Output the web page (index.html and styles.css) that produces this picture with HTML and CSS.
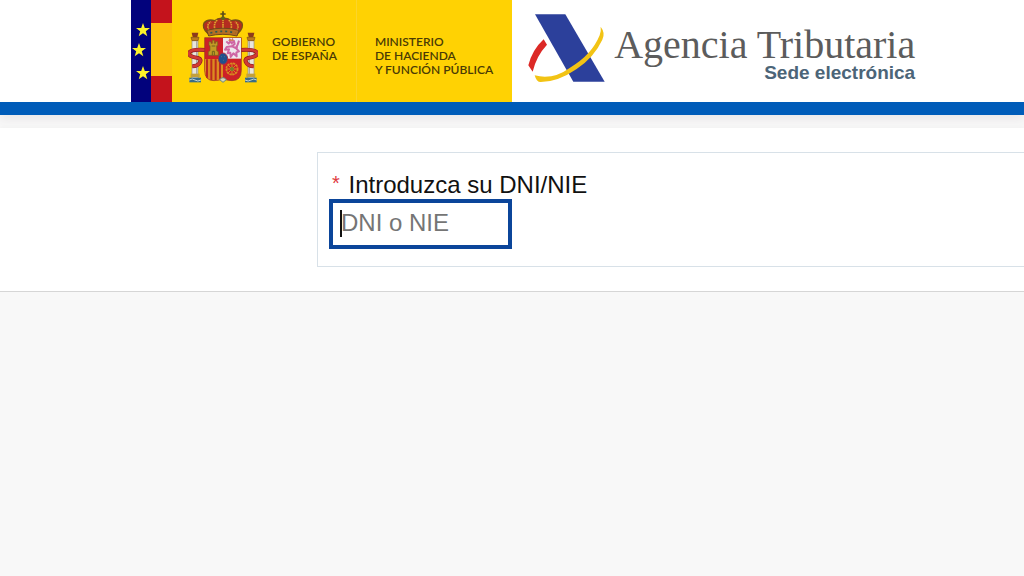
FILE: index.html
```html
<!DOCTYPE html>
<html lang="es">

<head>
    <meta charset="UTF-8">
    <meta name="viewport" content="width=device-width, initial-scale=1.0">
    <title>Agencia Tributaria - Sede electrónica</title>
    <link rel="stylesheet" href="styles.css">
</head>

<body>
    <header class="header">
        <div class="gobierno">
            <!-- EU and Spanish flags -->
            <svg class="flag" viewBox="0 0 41 102" aria-hidden="true">
                <defs>
                    <path id="star" d="M0,-7 L1.8,-2.1 L7,-2 L2.8,1.2 L4.3,6.2 L0,3.2 L-4.3,6.2 L-2.8,1.2 L-7,-2 L-1.8,-2.1 Z" />
                </defs>
                <rect width="41" height="102" fill="#c4131c" />
                <rect x="20" y="23" width="21" height="53" fill="#ffc20e" />
                <rect width="20" height="102" fill="#02027c" />
                <g fill="#fdf22b">
                    <use href="#star" x="12" y="30" />
                    <use href="#star" x="8" y="50" />
                    <use href="#star" x="12" y="73" />
                </g>
            </svg>

            <!-- coat of arms -->
            <svg class="escudo" viewBox="24 30 210 222" aria-hidden="true">
                <g id="column">
                    <rect x="36" y="122" width="18" height="112" fill="#e9e6dc" stroke="#8f8b82" stroke-width="2" />
                    <path d="M50 124v108" stroke="#aaa9a4" stroke-width="4" />
                    <path d="M35 98h20l-3 13h-14z" fill="#8d3b1c" />
                    <path d="M33 112h24l-3 10h-18z" fill="#bd7b1c" stroke="#7a4c19" stroke-width="2" />
                    <rect x="32" y="221" width="27" height="10" fill="#c3a03b" />
                    <path d="M28 233h35v14h-35z" fill="#3a6c87" />
                    <path d="M28 240q9-6 17 0t18 0" fill="none" stroke="#c5d5ce" stroke-width="3" />
                    <path d="M79 150Q34 146 27 158Q24 170 54 174Q67 178 58 190Q52 198 37 199" fill="none" stroke="#8e1b26" stroke-width="12" />
                    <path d="M79 150Q34 146 27 158Q24 170 54 174Q67 178 58 190Q52 198 37 199" fill="none" stroke="#d13a32" stroke-width="8" />
                </g>
                <use href="#column" transform="translate(258 0) scale(-1 1)" />

                <!-- crown -->
                <path d="M83 100Q65 83 72 69Q83 56 104 62Q115 53 129 55Q143 53 154 62Q175 56 186 69Q192 83 174 100z" fill="#b42c20" stroke="#775016" stroke-width="4" />
                <path d="M91 96Q75 76 93 65M108 97Q97 72 112 60M129 98V55M149 97Q161 72 146 60M167 96Q182 76 165 65" fill="none" stroke="#dea52c" stroke-width="5" stroke-dasharray="5 2" />
                <path d="M129 34v20M121 42h16" stroke="#594a1b" stroke-width="5" />
                <circle cx="129" cy="55" r="6" fill="#63631b" />
                <path d="M80 91Q129 78 177 91L171 108Q129 98 86 108z" fill="#b46e23" stroke="#70461b" stroke-width="3" />
                <path d="M91 99Q129 89 166 99" fill="none" stroke="#2c5b52" stroke-width="5" stroke-dasharray="6 9" />

                <!-- shield -->
                <path d="M74 113h110v98q0 31-28 31q-18 0-27-8q-9 8-27 8q-28 0-28-31z" fill="#cd2027" stroke="#8c3a23" stroke-width="2" />
                <path d="M129 114h54v62h-54z" fill="#eee7ec" />
                <path d="M75 177h54v57q-9 7-27 7q-27 0-27-30z" fill="#dd8b20" />
                <path d="M81 178v55M94 178v62M107 178v62M120 178v58" stroke="#b92a20" stroke-width="6" />
                <path d="M85 166v-11l5-3v-15h-3v-12h6v5h4v-9h6v9h4v-5h6v12h-3v15l5 3v11z" fill="#c39a25" stroke="#79631d" stroke-width="2" />
                <path d="M97 166v-12h6v12M95 138h11" fill="none" stroke="#6c651e" stroke-width="3" />
                <path d="M139 124l7 7 5-8 4 7 7-7 2 9-8 7 11 5 6-10 4-12M155 139l-15 2-5 8 12-1-4 12 8-2 1 13 8-11 10 9-1-12 8-3-7-7 1-8" fill="none" stroke="#ce65a3" stroke-width="6" stroke-linejoin="round" />
                <path d="M145 123l4-9 5 5 4-6 4 10z" fill="#d47a68" />
                <circle cx="156" cy="207" r="17" fill="none" stroke="#d88a20" stroke-width="5" stroke-dasharray="7 2" />
                <path d="M144 195l24 24M168 195l-24 24M156 189v36M138 207h36" stroke="#d88a20" stroke-width="3" />
                <circle cx="156" cy="207" r="6" fill="#73802a" />
                <path d="M119 239q10-12 20 0l-10 8z" fill="#d6d5ba" stroke="#678785" stroke-width="3" />
                <ellipse cx="129" cy="176" rx="14" ry="17" fill="#20518e" stroke="#a53145" stroke-width="3" />
                <path d="M124 170h1M134 170h1M129 181h1" stroke="#8b9670" stroke-width="4" />
            </svg>

            <p class="gob-text">GOBIERNO<br>DE ESPAÑA</p>
            <p class="gob-text ministerio">MINISTERIO<br>DE HACIENDA<br>Y FUNCIÓN PÚBLICA</p>
        </div>

        <a href="#" class="agencia">
            <svg class="logo" viewBox="50 36 240 216" aria-hidden="true">
                <path d="M77 43h91l118 202h-94z" fill="#2c409b" />
                <path d="M103 118l10 16Q81 168 70 215L57 196Q69 149 103 118z" fill="#dc2926" />
                <path d="M274 80Q289 99 279 119Q255 171 202 207Q144 247 92 246Q81 245 76 226Q130 241 182 203Q247 165 271 106Q276 93 274 80z" fill="#f2c314" />
            </svg>
            <span class="agencia-text">
                <span class="nombre">Agencia Tributaria</span>
                <span class="sede">Sede electrónica</span>
            </span>
        </a>
    </header>

    <main class="content">
        <form class="form-box">
            <label for="nif"><span class="required">*</span> Introduzca su DNI/NIE</label>
            <input type="text" id="nif" placeholder="DNI o NIE">
        </form>
    </main>
</body>

</html>
```

FILE: styles.css
```css
* {
    box-sizing: border-box;
}

body {
    margin: 0;
    font-family: "Liberation Sans", Arial, sans-serif;
    font-size: 24px;
    color: #111;
    background-color: #f8f8f8;
}

.header {
    display: flex;
    padding-left: 131px;
    background-color: #fff;
    border-bottom: 13px solid #005cb9;
    box-shadow: 0 4px 10px #e9e6e8;
}

.gobierno {
    display: flex;
    height: 102px;
    background-color: #ffd203;
}

.flag {
    width: 41px;
    height: 102px;
}

.escudo {
    width: 70px;
    height: 74px;
    margin: 10px 14px 0 16px;
}

.gob-text {
    margin: 0;
    padding-top: 35px;
    font-family: Lato, sans-serif;
    font-size: 12px;
    font-weight: 600;
    line-height: 14px;
    color: #4a3b05;
    white-space: nowrap;
}

.ministerio {
    margin-left: 19px;
    padding-left: 18px;
    padding-right: 19px;
    border-left: 1px solid #fbd52a;
}

.agencia {
    display: flex;
    padding-top: 12px;
    margin-left: 14px;
    text-decoration: none;
}

.logo {
    width: 80px;
    height: 72px;
}

.agencia-text {
    display: flex;
    flex-direction: column;
    align-items: flex-end;
    margin-left: 8px;
    padding-top: 14px;
    white-space: nowrap;
}

.nombre {
    font-family: "Liberation Serif", "Times New Roman", serif;
    font-size: 40px;
    line-height: 38px;
    color: #5c5c5c;
}

.sede {
    font-size: 19px;
    font-weight: bold;
    line-height: 18px;
    color: #4c6578;
}

/* white band with the form */
.content {
    margin-top: 13px;
    padding: 24px 0 24px 317px;
    background-color: #fff;
    border-bottom: 1px solid #d6d6d6;
    box-shadow: 0 3px 6px #dcdcdc;
}

.form-box {
    padding: 18px 11px 17px;
    border: 1px solid #d8e1e8;
    border-right: none;
}

label {
    display: block;
    padding-left: 3px;
    line-height: 28px;
}

.required {
    margin-right: 2px;
    font-size: 20px;
    line-height: 20px;
    vertical-align: 3px;
    color: #e0393e;
}

input[type="text"] {
    display: block;
    width: 183px;
    height: 50px;
    padding: 0 8px 3px;
    border: 4px solid #0b459a;
    outline: none;
    /* text cursor */
    background: #fff linear-gradient(#111, #111) no-repeat 7px 7px / 2px 27px;
    font-family: inherit;
    font-size: 24px;
    color: #111;
}

input::placeholder {
    color: #757575;
    opacity: 1;
}
```
